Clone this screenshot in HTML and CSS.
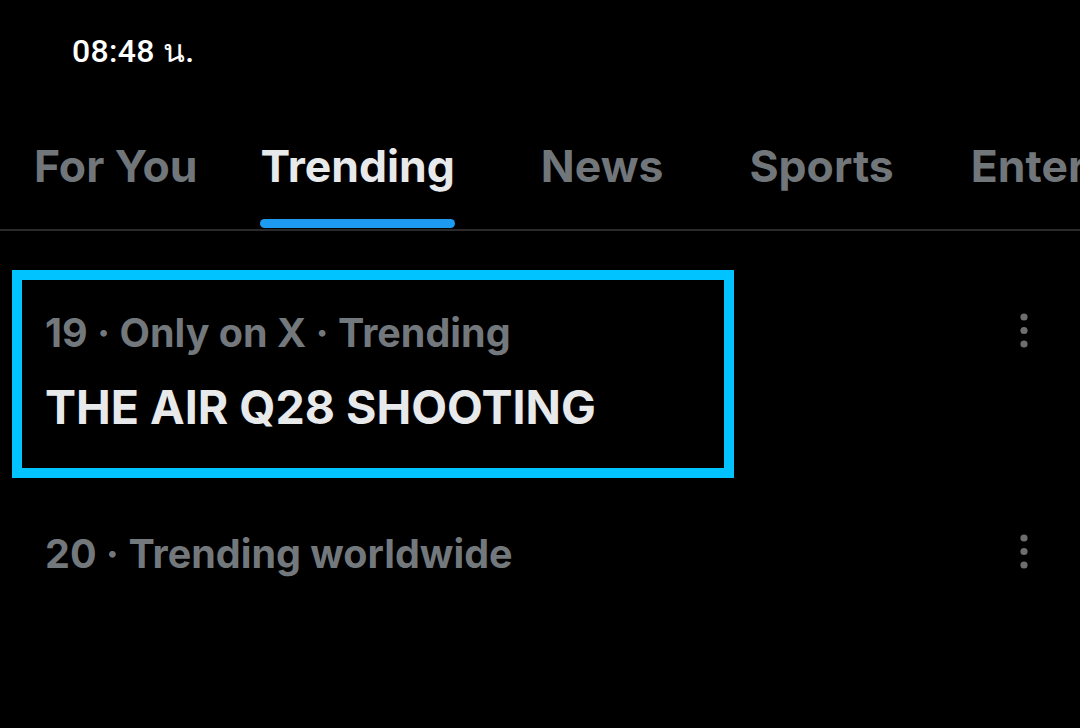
FILE: index.html
```html
<!DOCTYPE html>
<html lang="en">
<head>
<meta charset="utf-8">
<title>Explore - Trending</title>
<link rel="stylesheet" href="styles.css">
</head>
<body>
<div class="screen">
  <div class="status-bar">
    <span class="time">08:48 น.</span>
  </div>

  <nav class="tabs">
    <div class="tab"><span class="tab-label">For You</span><span class="indicator"></span></div>
    <div class="tab active"><span class="tab-label">Trending</span><span class="indicator"></span></div>
    <div class="tab"><span class="tab-label">News</span><span class="indicator"></span></div>
    <div class="tab"><span class="tab-label">Sports</span><span class="indicator"></span></div>
    <div class="tab"><span class="tab-label">Entertainment</span><span class="indicator"></span></div>
  </nav>

  <main class="trends">
    <article class="trend trend-first">
      <div class="trend-body">
        <div class="trend-meta">19 · Only on X · Trending</div>
        <div class="trend-title">THE AIR Q28 SHOOTING</div>
      </div>
      <button class="more" aria-label="More">
        <svg viewBox="0 0 8 36" width="8" height="36"><circle cx="4" cy="4" r="3.6"/><circle cx="4" cy="17.5" r="3.6"/><circle cx="4" cy="31" r="3.6"/></svg>
      </button>
      <div class="highlight"></div>
    </article>

    <article class="trend trend-second">
      <div class="trend-body">
        <div class="trend-meta">20 · Trending worldwide</div>
      </div>
      <button class="more" aria-label="More">
        <svg viewBox="0 0 8 36" width="8" height="36"><circle cx="4" cy="4" r="3.6"/><circle cx="4" cy="17.5" r="3.6"/><circle cx="4" cy="31" r="3.6"/></svg>
      </button>
    </article>
  </main>
</div>
</body>
</html>
```

FILE: styles.css
```css
* {
  box-sizing: border-box;
}

html, body {
  margin: 0;
  padding: 0;
  background: #000;
}

.screen {
  width: 1080px;
  height: 728px;
  overflow: hidden;
  background: #000;
  font-family: "Inter", "Noto Sans", sans-serif;
}

.status-bar {
  height: 110px;
  padding: 25px 0 0 72px;
}

.time {
  font-family: "Roboto", "Noto Sans", sans-serif;
  font-weight: 500;
  font-size: 32px;
  color: #fff;
  letter-spacing: 0.3px;
}

.tabs {
  display: flex;
  white-space: nowrap;
  border-bottom: 2px solid #2b2b2b;
  height: 121px;
}

.tab {
  display: flex;
  flex-direction: column;
  align-items: center;
  justify-content: flex-end;
  padding: 0 43px;
  flex: none;
}

.tab:first-child {
  padding: 0 33px 0 34px;
}

.tab:nth-child(2) {
  padding-left: 30px;
}

.tab:nth-child(4) {
  padding-right: 34px;
}

.tab-label {
  font-weight: 700;
  font-size: 44.5px;
  line-height: 52px;
  color: #71767b;
}

.tab.active .tab-label {
  color: #e7e9ea;
}

.indicator {
  display: block;
  width: 100%;
  height: 9px;
  margin-top: 27px;
  margin-bottom: 1px;
  border-radius: 5px;
  background: transparent;
}

.tab.active .indicator {
  background: #1d9bf0;
}

.trend {
  position: relative;
  display: flex;
  align-items: flex-start;
  padding: 0 45px;
}

.trend-first {
  padding-top: 80px;
  height: 248px;
}

.trend-second {
  padding-top: 53px;
}

.trend-body {
  flex: 1;
}

.trend-meta {
  font-weight: 700;
  font-size: 39.5px;
  line-height: 44px;
  color: #73787d;
}

.trend-title {
  margin-top: 26px;
  font-weight: 700;
  font-size: 46.5px;
  line-height: 52px;
  color: #e7e9ea;
}

.more {
  flex: none;
  border: 0;
  padding: 0;
  margin: 2px -4px 0 0;
  background: transparent;
  width: 30px;
  height: 40px;
  display: flex;
  justify-content: center;
}

.more svg {
  fill: #6e6e6e;
}

.highlight {
  position: absolute;
  left: 12px;
  top: 39px;
  width: 722px;
  height: 208px;
  border: 10px solid #00c3ff;
  pointer-events: none;
}
```
